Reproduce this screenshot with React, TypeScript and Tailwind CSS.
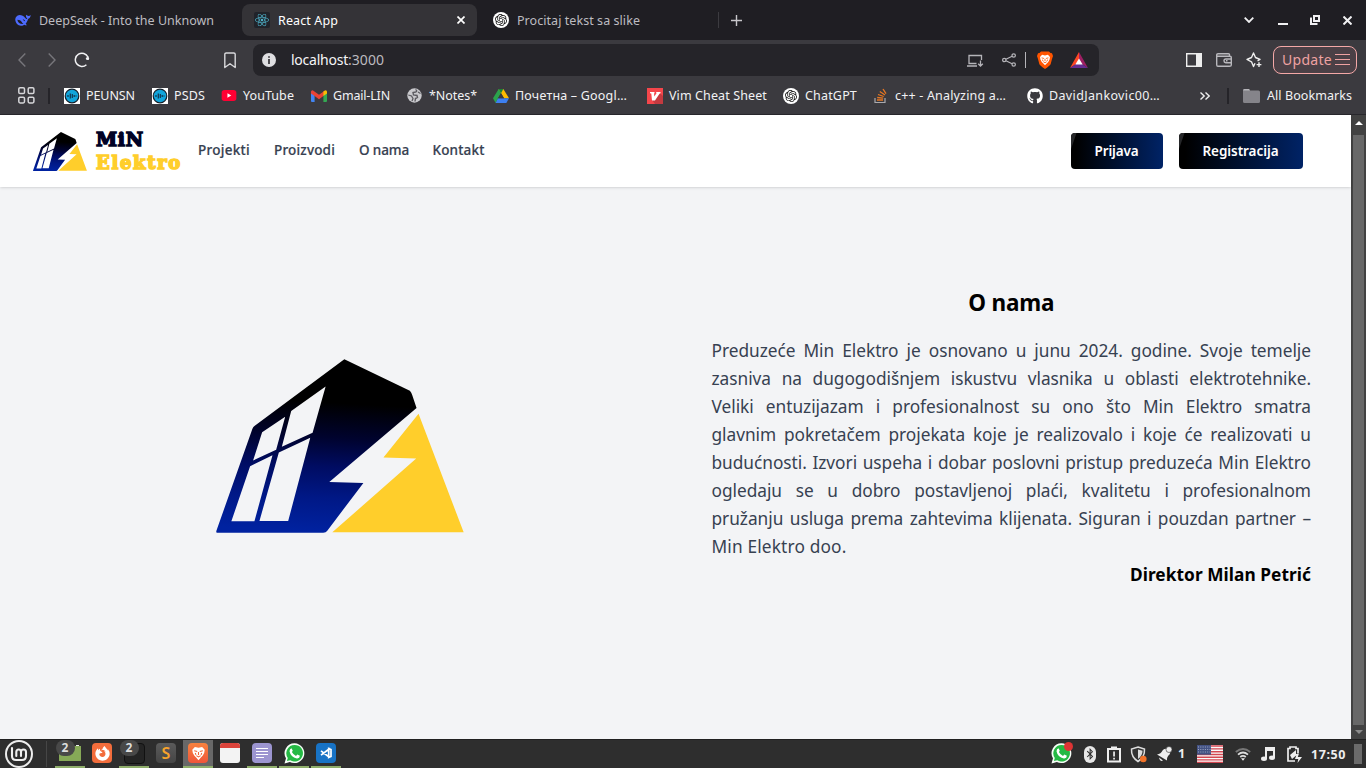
import React, { useLayoutEffect, useRef, useState } from "react";
import { FaReact, FaGithub, FaFirefoxBrowser, FaBluetoothB } from "react-icons/fa";
import { SiOpenai } from "react-icons/si";

/* Text spread over the width of its box by letter spacing. */
function Fit({ children, className = "" }: { children: string; className?: string }) {
  const outer = useRef<HTMLSpanElement>(null);
  const inner = useRef<HTMLSpanElement>(null);
  const [spacing, setSpacing] = useState(0);
  useLayoutEffect(() => {
    if (!outer.current || !inner.current) return;
    const free = outer.current.clientWidth - inner.current.getBoundingClientRect().width;
    setSpacing(free / children.length);
  }, [children]);
  return (
    <span ref={outer} className={`block shrink-0 whitespace-nowrap ${className}`}>
      <span ref={inner} style={{ letterSpacing: `${spacing}px` }}>{children}</span>
    </span>
  );
}

function HouseLogo({ className, id }: { className: string; id: string }) {
  return (
    <svg viewBox="49 56 742 521" preserveAspectRatio="none" className={className}>
      <defs>
        <linearGradient id={id} gradientUnits="userSpaceOnUse" x1="400" y1="57" x2="370" y2="576">
          <stop offset="0.25" stopColor="#000000" />
          <stop offset="0.45" stopColor="#00032e" />
          <stop offset="0.62" stopColor="#000c62" />
          <stop offset="0.8" stopColor="#001886" />
          <stop offset="1" stopColor="#0022a0" />
        </linearGradient>
      </defs>
      <path
        fill={`url(#${id})`}
        fillRule="evenodd"
        d="M433 57L629 151Q634 156 636 164L649 203L388 424L490 427L382 570Q378 576 370 576H52Q48 576 51 568L158 265Q160 259 165 256Z M377 138L274 212L246 319L338 277Z M256 229L187 275L160 360L229 328Z M218 344L151 377L95 542H164Z M331 292L237 336L179 541H265Z"
      />
      <path fill="#ffce2b" d="M655 220L790 575H397L648 354L550 351Z" />
    </svg>
  );
}

function LionFace({ className, cut }: { className: string; cut: string }) {
  return (
    <svg viewBox="0 0 14 14" className={className}>
      <path fill="#fff" d="M3.600 1L7 1.700 10.400 1 12.800 3.400 12.300 6.500 10.800 9.200 9 11 7 13.200 5 11 3.200 9.200 1.700 6.500 1.200 3.400Z" />
      <path fill="none" stroke={cut} strokeWidth="1" d="M3 4.500L5.800 5.200M11 4.500L8.200 5.200M7 5.500V8.300M5 9L7 10.200 9 9M4 6.500L4.600 8.300M10 6.500L9.400 8.300" />
    </svg>
  );
}

function BraveShield() {
  return (
    <span className="relative ml-[11px] flex h-[18px] w-4 shrink-0 justify-center">
      <svg viewBox="0 0 16 18" className="absolute inset-0 h-[18px] w-4"><path fill="#ff5500" d="M4 .5H12L13.500 2 15 2.300 16 5 15 8 13.700 13Q13 14.600 8 18 3 14.600 2.300 13L1 8 0 5 1 2.300 2.500 2Z" /></svg>
      <LionFace className="relative mt-[2.500px] size-[12px]" cut="#ff5500" />
    </span>
  );
}

function Whale() {
  return (
    <svg viewBox="0 0 48 36" className="ml-[15px] h-[12px] w-[16px] shrink-0">
      <path fill="#4d6bfe" d="M47 3c-2 2-4 3-6 3-3-1-6-2-8-4-1 4 1 9 4 12-2 2-4 0-7-3C26 6 20 3 14 3 5 4 0 11 1 19c1 9 8 16 17 16 5 0 8-2 10-3 3 2 7 2 8 1-2-1-3-3-4-4 4-5 6-9 7-14 4-1 8-5 8-12Z" />
      <path fill="#1f1e23" d="M7 17c6 0 11 2 14 8 1 3 3 4 5 5-10 1-18-4-19-13Zm16-1c5 0 7 3 7 6-3 0-4-3-7-6Z" />
    </svg>
  );
}

function GptBadge({ className = "" }: { className?: string }) {
  return (
    <span className={`flex size-4 shrink-0 items-center justify-center rounded-full bg-white ${className}`}>
      <SiOpenai className="size-[12px] text-[#111]" />
    </span>
  );
}

function TabStrip() {
  return (
    <div className="flex h-10 items-center bg-[#1f1e23] text-[12.5px] leading-5 text-[#bdbcc0]">
      <Whale />
      <Fit className="ml-2 mt-[1px] w-[175px]">DeepSeek - Into the Unknown</Fit>
      <div className="ml-[28px] flex h-8 w-[235px] shrink-0 items-center rounded-[8px] bg-[#343337] text-white">
        <span className="ml-3 flex size-4 shrink-0 items-center justify-center rounded-[2px] bg-[#20232a]">
          <FaReact className="size-[14px] text-[#4fb3cb]" />
        </span>
        <Fit className="ml-2 mt-[1px] w-[60px]">React App</Fit>
        <svg viewBox="0 0 8 8" className="ml-[119px] size-2 shrink-0" stroke="#fff" strokeWidth="1.7"><path d="M.5.5l7 7M7.500.5l-7 7" /></svg>
      </div>
      <GptBadge className="ml-4" />
      <Fit className="ml-2 mt-[1px] w-[123px]">Procitaj tekst sa slike</Fit>
      <span className="ml-[78px] h-4 w-px shrink-0 bg-[#3c3b40]" />
      <svg viewBox="0 0 11 11" className="ml-[12px] size-[11px] shrink-0" stroke="#c8c7cb" strokeWidth="1.4"><path d="M5.500 0v11M0 5.500h11" /></svg>
      <svg viewBox="0 0 10 6" className="ml-[502px] h-[6px] w-[10px] shrink-0" fill="none" stroke="#f0f0f2" strokeWidth="1.8"><path d="M.7.700L5 5 9.300.700" /></svg>
      <span className="ml-[24px] mt-[7px] h-[2px] w-[10px] shrink-0 bg-[#f0f0f2]" />
      <svg viewBox="0 0 10 10" className="ml-[22px] size-[10px] shrink-0" fill="none" stroke="#f0f0f2" strokeWidth="2"><path d="M4 1h5v5H4zM1 2.500V9h6.500" /></svg>
      <svg viewBox="0 0 9 9" className="ml-[23px] size-[9px] shrink-0" stroke="#f0f0f2" strokeWidth="2"><path d="M.5.5l8 8M8.500.5l-8 8" /></svg>
    </div>
  );
}

function Toolbar() {
  return (
    <div className="flex h-10 items-center bg-[#3b3a3f]">
      <svg viewBox="0 0 8 14" className="ml-[18px] h-[14px] w-2 shrink-0" fill="none" stroke="#77767b" strokeWidth="1.4"><path d="M7.300.5L1 7l6.300 6.500" /></svg>
      <svg viewBox="0 0 8 14" className="ml-[22px] h-[14px] w-2 shrink-0" fill="none" stroke="#77767b" strokeWidth="1.4"><path d="M.7.5L7 7 .7 13.500" /></svg>
      <svg viewBox="0 0 16 16" className="ml-[18px] size-4 shrink-0" fill="none" stroke="#f1f1f3" strokeWidth="1.5">
        <path d="M12.400 12.700A6.600 6.600 0 1 1 13.900 5" />
        <circle cx="13.500" cy="6.500" r="1.600" fill="#f1f1f3" stroke="none" />
        <path d="M12.800 7l1.900-3v4z" fill="#f1f1f3" stroke="none" />
      </svg>
      <svg viewBox="0 0 12 17" className="ml-[134px] h-[17px] w-3 shrink-0" fill="none" stroke="#d8d8db" strokeWidth="1.400" strokeLinejoin="round"><path d="M.8 2.300Q.8 1 2.200 1h7.600q1.400 0 1.400 1.300V15.500L6 11.700.8 15.500z" /></svg>
      <div className="ml-[17px] flex h-8 w-[846px] shrink-0 items-center rounded-[8px] bg-[#252429]">
        <svg viewBox="0 0 14 14" className="ml-[9px] size-[14px] shrink-0"><circle cx="7" cy="7" r="7" fill="#dedee1" /><path d="M6.200 3.200h1.600v1.500H6.200zM6.200 6h1.600v5H6.200z" fill="#252429" /></svg>
        <span className="ml-[15px] flex text-[14px] leading-5">
          <Fit className="w-[57px] text-[#f5f5f7]">localhost</Fit>
          <Fit className="w-[36px] text-[#bbb9bf]">:3000</Fit>
        </span>
        <svg viewBox="0 0 17 13" className="ml-[583px] h-[13px] w-[17px] shrink-0" fill="none" stroke="#b5b4b9" strokeWidth="1.300"><path d="M9.500 9.500H2V1.500H14.500V6M0 12H10M13.500 6.500V12M11.200 9.800L13.500 12.100 15.800 9.800" /></svg>
        <svg viewBox="0 0 14 14" className="ml-[18px] size-[14px] shrink-0" fill="none" stroke="#b5b4b9" strokeWidth="1.200"><circle cx="2.300" cy="7" r="1.700" /><circle cx="11.700" cy="2.500" r="1.700" /><circle cx="11.700" cy="11.500" r="1.700" /><path d="M3.900 6.200L10.100 3.200M3.900 7.800L10.100 10.800" /></svg>
        <span className="ml-[9px] h-4 w-px shrink-0 bg-[#b5b4b9]" />
        <BraveShield />
        <svg viewBox="0 0 18 16" className="ml-[17px] h-4 w-[18px] shrink-0"><path d="M9 0L0 16 9 10z" fill="#ff4724" /><path d="M9 0L18 16 9 10z" fill="#9e1f63" /><path d="M0 16H18L9 10z" fill="#662d91" /><path d="M9 6.500L5.300 12.500h7.400z" fill="#fff" /></svg>
      </div>
      <svg viewBox="0 0 16 14" className="ml-[87px] h-[14px] w-4 shrink-0"><path d="M.7.700H15.300V13.300H.7z" fill="none" stroke="#eee" strokeWidth="1.400" /><path d="M10 0h6v14h-6z" fill="#eee" /></svg>
      <svg viewBox="0 0 16 14" className="ml-[14px] h-[14px] w-4 shrink-0" fill="none" stroke="#b9b8bd" strokeWidth="1.400"><path d="M13.500 3V1.700Q13.500.7 12.500.700H2Q.7.700.7 2V11.700Q.7 13.300 2 13.300H13.500Q15.300 13.300 15.300 12V4.500Q15.300 3.300 14 3.300H1M15 6H9.800Q8 6 8 7.800T9.800 9.700H15" /><path d="M10 7.800h1.500" /></svg>
      <svg viewBox="0 0 17 16" className="ml-[14px] h-4 w-[17px] shrink-0" fill="none" stroke="#eee" strokeWidth="1.400" strokeLinejoin="round"><path d="M9 11.200L7.500 14.500 5.500 9.800 1 7.500 5.500 5.500 7.500 1 9.500 5.500 14 7.500 11.500 9M13 10.200v4.800M10.600 12.600h4.800" /></svg>
      <div className="ml-[10px] flex h-7 w-[84px] shrink-0 items-center rounded-[8px] border border-[#f4a8a7] bg-[#4b4046] text-[14px] leading-5 text-[#efa2a2]">
        <Fit className="ml-[8px] w-[50px]">Update</Fit>
        <svg viewBox="0 0 15 12" className="ml-[3px] h-3 w-[15px] shrink-0" stroke="#efa2a2" strokeWidth="1.200"><path d="M0 .5h15M0 5.500h15M0 10.500h15" /></svg>
      </div>
    </div>
  );
}

function WaveBadge({ className }: { className: string }) {
  return (
    <svg viewBox="0 0 16 16" className={`size-4 shrink-0 ${className}`}>
      <path d="M0 0h16v16H0z" fill="#fff" /><circle cx="8" cy="8" r="6.800" fill="#11a5db" stroke="#14202b" strokeWidth="1.200" />
      <path d="M4 7v2M6.300 5.500v5M8.300 6v4M10.200 7v2M12 7.500v1" stroke="#12344c" strokeWidth="1.200" />
    </svg>
  );
}

function Bookmarks() {
  return (
    <div className="flex h-[34px] items-center bg-[#3b3a3f] pb-[3px] text-[12.5px] leading-5 text-[#f2f2f4]">
      <svg viewBox="0 0 17 17" className="ml-[18px] size-[17px] shrink-0" fill="none" stroke="#d6d6d9" strokeWidth="1.500"><rect x=".8" y=".8" width="5.700" height="5.700" rx="1.300" /><rect x="10.200" y=".8" width="5.700" height="5.700" rx="1.300" /><rect x=".8" y="10.200" width="5.700" height="5.700" rx="1.300" /><rect x="10.200" y="10.200" width="5.700" height="5.700" rx="1.300" /></svg>
      <span className="ml-[13px] h-4 w-[2px] shrink-0 bg-[#252429]" />
      <WaveBadge className="ml-[14px]" />
      <Fit className="ml-[6px] w-[49px]">PEUNSN</Fit>
      <WaveBadge className="ml-[17px]" />
      <Fit className="ml-[6px] w-[31px]">PSDS</Fit>
      <svg viewBox="0 0 16 12" className="ml-4 h-[11px] w-4 shrink-0"><rect width="16" height="12" rx="3" fill="#ff0033" /><path d="M6.300 3.500L10.500 6 6.300 8.500z" fill="#fff" /></svg>
      <Fit className="ml-[6px] w-[51px]">YouTube</Fit>
      <svg viewBox="0 0 16 12" className="ml-[17px] h-[12px] w-4 shrink-0"><path d="M1 1L3.600 3v9H1Q0 12 0 11V2z" fill="#4285f4" /><path d="M15 1L12.400 3v9H15Q16 12 16 11V2z" fill="#34a853" /><path d="M0 2Q.2 0 2 .4L8 4.800 14 .4 12.400 6 8 9.300 3.600 6 0 3.500z" fill="#ea4335" /><path d="M12.400 1.600L14 .4Q16 0 16 2V3.500L12.400 6z" fill="#fbbc04" /></svg>
      <Fit className="ml-[6px] w-[57px]">Gmail-LIN</Fit>
      <svg viewBox="0 0 15 15" className="ml-[17px] size-[15px] shrink-0"><circle cx="7.500" cy="7.500" r="7.200" fill="#c9c9cd" /><path d="M8.500 1.500Q11 3 8.500 4L6 4.500 6.500 7 10 7.500 10.500 9.500 8.500 10.500 8 13.500" fill="none" stroke="#5c5b61" strokeWidth="1.400" /><path d="M1.300 7L4.500 8 6 10.500 5 13M11 4L13.500 5.500" fill="none" stroke="#5c5b61" strokeWidth="1.300" /></svg>
      <Fit className="ml-[7px] w-[48px]">*Notes*</Fit>
      <svg viewBox="0 0 48 42" className="ml-4 h-[14px] w-4 shrink-0"><path d="M17 0h14L15 28 8 42 0 28z" fill="#2ba24c" /><path d="M17 0h14l17 28H33z" fill="#ffba00" /><path d="M17 0h14L24 13z" fill="#188038" /><path d="M15 28h33l-8 14H8z" fill="#3d7ff0" /><path d="M24 13l9 15H15z" fill="#3b3a3f" /></svg>
      <Fit className="ml-[6px] w-[112px]">Почетна – Googl…</Fit>
      <svg viewBox="0 0 16 16" className="ml-5 size-4 shrink-0"><path d="M0 0h16v16H0z" fill="#f5464b" /><path d="M12 4L16 8V16H8L5 12z" fill="#c43a40" /><path d="M3 4h4.500v1.200L7 5.500 7.300 8.500 9.500 5.200 9 4h4.500v1.200L12.500 5.800 8 12.500H5L4.300 5.500 3 5.200z" fill="#fff" /></svg>
      <Fit className="ml-[6px] w-[98px]">Vim Cheat Sheet</Fit>
      <GptBadge className="ml-4" />
      <Fit className="ml-[6px] w-[52px]">ChatGPT</Fit>
      <svg viewBox="0 0 15 16" className="ml-[17px] h-4 w-[15px] shrink-0" fill="none"><path d="M1 10v4.500h10V10" stroke="#aaa9ad" strokeWidth="1.200" /><path d="M3 12h6M3.200 9.500l6 .7M4 6.500L9.700 8.500M5.800 3.500L11 7M9 1L12 5.700" stroke="#e87722" strokeWidth="1.300" /></svg>
      <Fit className="ml-[6px] w-[111px]">c++ - Analyzing a…</Fit>
      <FaGithub className="ml-[21px] size-4 shrink-0 text-white" />
      <Fit className="ml-[6px] w-[111px]">DavidJankovic00…</Fit>
      <svg viewBox="0 0 10 8" className="ml-10 h-2 w-[10px] shrink-0" fill="none" stroke="#eee" strokeWidth="1.400"><path d="M.5.500L4.200 4 .5 7.500M5.500.5L9.200 4 5.500 7.500" /></svg>
      <span className="ml-[17px] h-4 w-[2px] shrink-0 bg-[#252429]" />
      <svg viewBox="0 0 17 14" className="ml-[14px] h-[14px] w-[17px] shrink-0"><path d="M0 2Q0 0 1.500 0H6l1 1.500h8.500q1.500 0 1.500 1.500v9.500q0 1.500-1.500 1.500h-14Q0 14 0 12.500z" fill="#85848a" /><path d="M0 1.500Q0 0 1.500 0H6l1 1.500z" fill="#b6b5ba" /></svg>
      <Fit className="ml-[7px] w-[85px]">All Bookmarks</Fit>
    </div>
  );
}

const paragraph = [
  "Preduzeće Min Elektro je osnovano u junu 2024. godine. Svoje temelje",
  "zasniva na dugogodišnjem iskustvu vlasnika u oblasti elektrotehnike.",
  "Veliki entuzijazam i profesionalnost su ono što Min Elektro smatra",
  "glavnim pokretačem projekata koje je realizovalo i koje će realizovati u",
  "budućnosti. Izvori uspeha i dobar poslovni pristup preduzeća Min Elektro",
  "ogledaju se u dobro postavljenoj plaći, kvalitetu i profesionalnom",
  "pružanju usluga prema zahtevima klijenata. Siguran i pouzdan partner –",
];

function GradientButton({ children, width, text }: { children: string; width: string; text: string }) {
  return (
    <button className={`flex h-9 shrink-0 items-center justify-center overflow-hidden rounded bg-linear-to-r/srgb from-black from-5% to-[#002366] text-[13.5px] font-semibold leading-5 text-white ${width}`}>
      <svg viewBox="0 0 6 36" className="h-9 w-[6px] shrink-0"><path d="M0 0h5.500L0 16z" fill="#262729" /></svg>
      <span className="flex grow justify-center pr-[7px]"><Fit className={text}>{children}</Fit></span>
    </button>
  );
}

function Page() {
  return (
    <div className="flex w-[1351px] shrink-0 flex-col bg-[#f3f4f6]">
      <nav className="z-10 flex h-[72px] shrink-0 bg-white shadow">
        <HouseLogo id="smallLogo" className="ml-[33px] mt-[16.500px] h-[39px] w-[54px] shrink-0" />
        <div className="ml-[9px] mt-[12px] flex w-[86px] shrink-0 flex-col font-['DejaVu_Serif',serif] text-[19px] font-bold leading-6">
          <Fit className="w-[48px] text-[#000226] [-webkit-text-stroke:1.500px_#000226]">MiN</Fit>
          <Fit className="w-[86px] text-[18px] text-[#ffce2b] [-webkit-text-stroke:1.500px_#ffce2b]">Elektro</Fit>
        </div>
        <div className="ml-4 mt-[25px] flex text-[13.5px] font-medium leading-5 text-[#374151] [-webkit-text-stroke:0.200px_#374151]">
          <Fit className="w-[52px]">Projekti</Fit>
          <Fit className="ml-6 w-[61px]">Proizvodi</Fit>
          <Fit className="ml-6 w-[49.500px]">O nama</Fit>
          <Fit className="ml-6 w-[52px]">Kontakt</Fit>
        </div>
        <div className="ml-auto mr-12 mt-[18px] flex gap-4">
          <GradientButton width="w-[92px]" text="w-[44px]">Prijava</GradientButton>
          <GradientButton width="w-[124px]" text="w-[76px]">Registracija</GradientButton>
        </div>
      </nav>
      <main className="flex grow">
        <HouseLogo id="largeLogo" className="ml-[216px] mt-[171.500px] h-[174px] w-[248px] shrink-0" />
        <section className="ml-[247.500px] mt-[100px] w-[599.500px] shrink-0">
          <h1 className="mb-[18px] flex justify-center text-[22.500px] font-bold leading-8 text-black"><Fit className="w-[86px]">O nama</Fit></h1>
          <div className="text-[17.300px] leading-7 text-[#374151]">
            {paragraph.map((line) => (
              <p key={line} className="whitespace-nowrap tracking-[-0.03px] [text-align-last:justify]">{line}</p>
            ))}
            <Fit className="w-[135px]">Min Elektro doo.</Fit>
          </div>
          <div className="flex justify-end text-[17.300px] font-bold leading-7 text-black"><Fit className="w-[181px]">Direktor Milan Petrić</Fit></div>
        </section>
      </main>
    </div>
  );
}

function Scrollbar() {
  return (
    <div className="flex w-[15px] shrink-0 flex-col items-center bg-[#424242]">
      <svg viewBox="0 0 8 4" className="mt-[6px] h-1 w-2 shrink-0"><path d="M4 0l4 4H0z" fill="#fff" /></svg>
      <div className="mt-[10px] h-[590px] w-[11px] bg-[#686868]" />
      <svg viewBox="0 0 8 4" className="mt-[5px] h-1 w-2 shrink-0"><path d="M0 0h8L4 4z" fill="#8b8b8b" /></svg>
    </div>
  );
}

function Tile({ children, open = false, active = false }: { children: React.ReactNode; open?: boolean; active?: boolean }) {
  return (
    <div className={`relative flex h-[28px] w-[30px] shrink-0 items-center justify-center border-b-2 ${open ? "border-[#8fae6b]" : "border-transparent"} ${active ? "bg-[#686868]" : ""}`}>
      {children}
    </div>
  );
}

function CountBadge() {
  return <span className="absolute left-[1px] top-0 flex h-[16px] w-[19px] items-center justify-center rounded-full bg-[#484848] pr-[1px] text-[12px] font-bold leading-4 text-[#dedede]">2</span>;
}

function WhatsApp({ className = "" }: { className?: string }) {
  return (
    <svg viewBox="0 0 21 21" className={className}>
      <path d="M10.700.3a9.900 9.900 0 1 1-4.800 18.700L.5 20.500 2 15.300A9.900 9.900 0 0 1 10.700.3z" fill="#f7fff8" />
      <path d="M10.800 1.900a8.300 8.300 0 1 1-4.600 15.300l-3.300.9.900-3.200A8.300 8.300 0 0 1 10.800 1.900z" fill="#25b944" />
      <path d="M7.500 5.300l1.300 2.500-.9 1.200q1.500 2.900 4.100 4l1.300-1.500 2.600 1.300q-.2 2.900-3.100 2.600-6.200-1.300-7.300-7.100Q5.700 6 7.500 5.300z" fill="#fff" />
    </svg>
  );
}

function Taskbar() {
  return (
    <div className="flex h-[29px] items-center border-t border-[#202020] bg-[#2e2e2e]">
      <span className="ml-[5px] flex size-[28px] shrink-0 items-center justify-center rounded-full border-2 border-[#ededed]">
        <svg viewBox="0 0 20 20" className="size-5" fill="none" stroke="#f0f0f0" strokeWidth="2.100" strokeLinecap="round"><path d="M3 4V12Q3 16 7 16H13Q17 16 17 12V8Q17 5.500 14.500 5.500T12 8V12M12 8Q12 5.500 9.700 5.500T7.300 8V12" /></svg>
      </span>
      <span className="ml-[13px] h-[26px] w-px shrink-0 bg-[#464646]" />
      <div className="ml-2 flex shrink-0 gap-[2px]">
        <Tile open>
          <svg viewBox="0 0 22 20" className="h-5 w-[22px]"><path d="M0 6h12l2-3h8v15H0z" fill="#86a957" /><path d="M17 2h3v1h-3z" fill="#eee" /></svg>
          <CountBadge />
        </Tile>
        <Tile><span className="flex size-5 items-center justify-center rounded-[4px] bg-[#f36d3c]"><FaFirefoxBrowser className="size-[15px] text-white" /></span></Tile>
        <Tile open><span className="size-[21px] rounded-[4px] border border-[#111] bg-[#242424]" /><CountBadge /></Tile>
        <Tile><span className="flex size-5 items-center justify-center rounded-[4px] bg-linear-to-b from-[#5b5b5b] to-[#454545] text-[16px] font-semibold leading-5 text-[#f8a32b]">S</span></Tile>
        <Tile open active><span className="flex size-5 items-center justify-center rounded-[4px] bg-linear-to-b from-[#f7823f] to-[#f0543a]"><LionFace className="size-[15px]" cut="#f2683a" /></span></Tile>
        <Tile><span className="flex h-5 w-[20px] flex-col overflow-hidden rounded-[3px] bg-[#f3f3f3]"><span className="h-[5px] bg-[#dc443b]" /></span></Tile>
        <Tile open><span className="flex size-5 flex-col justify-center gap-[2px] rounded-[4px] bg-[#9c95d0] px-1"><span className="h-px bg-white" /><span className="h-px bg-white" /><span className="h-px bg-white" /><span className="h-px w-2 bg-white" /></span></Tile>
        <Tile open><WhatsApp className="size-[21px]" /></Tile>
        <Tile open><span className="flex size-5 items-center justify-center rounded-[4px] bg-[#1873c5]"><svg viewBox="0 0 12 12" className="size-3" fill="none" stroke="#fff" strokeWidth="1.700"><path d="M1 3.800L8.700 9.700V2.300L1 8.200M8.700 1.500L11 2.500V9.500L8.700 10.500z" /></svg></span></Tile>
      </div>
      <div className="relative ml-auto h-[22px] w-[22px] shrink-0">
        <WhatsApp className="size-[21px]" />
        <span className="absolute right-0 -top-[1px] size-[9px] rounded-full bg-[#dd3434]" />
      </div>
      <span className="ml-[11px] flex h-[17px] w-3 shrink-0 items-center justify-center rounded-full bg-[#e7e7e7]"><FaBluetoothB className="size-[12px] text-[#2b2b2b]" /></span>
      <svg viewBox="0 0 14 17" className="ml-[11px] h-[17px] w-[14px] shrink-0"><path d="M1 3h12v12.500H1z" fill="none" stroke="#eee" strokeWidth="2" /><path d="M4 .5h6v3H4zM6.200 5.500h1.700v5H6.200zM6.200 11.700h1.700v1.700H6.200z" fill="#eee" /></svg>
      <svg viewBox="0 0 17 17" className="ml-[9px] h-[17px] w-[17px] shrink-0"><path d="M8 1l6.500 2Q15 11 8 15.500 1 11 1.500 3z" fill="#333" stroke="#ddd" strokeWidth="1.500" /><path d="M8 3.500l4.500 1.300Q12.500 10 8 13z" fill="#ddd" /><circle cx="13.300" cy="13" r="3.300" fill="#f37329" /></svg>
      <svg viewBox="0 0 16 16" className="ml-[9px] mr-[6px] size-4 shrink-0"><path d="M1 8.500Q5 8 6.500 4.500 8.500 1.500 12 3.500T13.500 8.500Q10.500 11 11 14.500z" fill="#eee" /><circle cx="13" cy="3.500" r="3" fill="#eee" stroke="#2e2e2e" strokeWidth=".6" /><path d="M3 11.500l4 3Q4 16 3 11.500z" fill="#eee" /></svg>
      <Fit className="w-[7px] text-[12.500px] font-bold leading-5 text-[#eee]">1</Fit>
      <svg viewBox="0 0 26 18" className="ml-[12px] h-[18px] w-[26px] shrink-0"><path d="M0 0h26v18H0z" fill="#fafafa" /><path d="M0 1h26M0 3.900h26M0 6.700h26M0 9.500h26M0 12.200h26M0 14.900h26M0 17.500h26" stroke="#d44751" strokeWidth="1.400" /><path d="M0 0h14v9.700H0z" fill="#435283" /><path d="M1 2h13M1 4.500h13M1 7h13" stroke="#c7cddd" strokeWidth=".7" strokeDasharray="1 1.300" /></svg>
      <svg viewBox="0 0 16 14" className="ml-[12px] h-[14px] w-4 shrink-0" fill="none" strokeWidth="1.800"><path d="M.8 5Q8-1 15.200 5" stroke="#777" /><path d="M3 7.600Q8 3.500 13 7.600" stroke="#ddd" /><path d="M5.200 10Q8 7.800 10.800 10" stroke="#ddd" /><path d="M8 13.800l-2-2.500h4z" fill="#eee" stroke="none" /></svg>
      <svg viewBox="0 0 14 14" className="ml-[10px] h-[14px] w-[14px] shrink-0"><path d="M4 0h10v11h-2V4H6v8H4z" fill="#eee" /><ellipse cx="3" cy="11.700" rx="3" ry="2.200" fill="#eee" /><ellipse cx="11" cy="10.700" rx="3" ry="2.200" fill="#eee" /></svg>
      <svg viewBox="0 0 15 17" className="ml-[12px] h-[17px] w-[15px] shrink-0"><path d="M8 15H1V2.500h2V1h6v1.500h2V7" fill="none" stroke="#eee" strokeWidth="1.700" /><path d="M3 9l6-5v4h2l-6 5zM10 7.500h2L10.800 11H15l-4.500 6 .8-4H8z" fill="#eee" /></svg>
      <Fit className="ml-[9px] mt-px w-[35px] text-[12.500px] font-bold leading-5 text-[#eee]">17:50</Fit>
      <span className="ml-[8px] mr-1 h-5 w-2 shrink-0 bg-[#6b6b6b]" />
    </div>
  );
}

export default function App() {
  return (
    <div className="flex h-[768px] w-[1366px] flex-col overflow-hidden font-['Noto_Sans',sans-serif]">
      <TabStrip />
      <Toolbar />
      <Bookmarks />
      <div className="h-px shrink-0 bg-[#28272c]" />
      <div className="flex h-[624px] shrink-0">
        <Page />
        <Scrollbar />
      </div>
      <Taskbar />
    </div>
  );
}
